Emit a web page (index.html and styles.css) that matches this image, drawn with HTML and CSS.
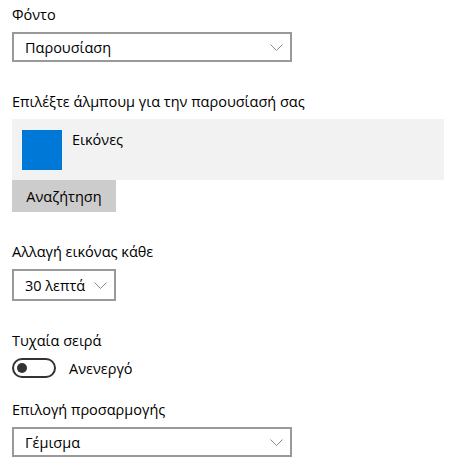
FILE: index.html
```html
<!DOCTYPE html>
<html lang="el">
<head>
    <meta charset="UTF-8">
    <title>Φόντο</title>
    <link rel="stylesheet" href="styles.css">
</head>
<body>
    <div class="settings">
        <div class="label first">Φόντο</div>
        <div class="select wide">
            <span>Παρουσίαση</span>
            <svg class="chev" width="13" height="7" viewBox="0 0 13 7"><path d="M0.5 0.5 L6.5 6.5 L12.5 0.5" fill="none" stroke="#8a8a8a" stroke-width="1"/></svg>
        </div>

        <div class="label">Επιλέξτε άλμπουμ για την παρουσίασή σας</div>
        <div class="album">
            <div class="thumb"></div>
            <div class="album-name">Εικόνες</div>
        </div>
        <button class="btn">Αναζήτηση</button>

        <div class="label">Αλλαγή εικόνας κάθε</div>
        <div class="select narrow">
            <span>30 λεπτά</span>
            <svg class="chev" width="13" height="7" viewBox="0 0 13 7"><path d="M0.5 0.5 L6.5 6.5 L12.5 0.5" fill="none" stroke="#8a8a8a" stroke-width="1"/></svg>
        </div>

        <div class="label">Τυχαία σειρά</div>
        <div class="toggle-row">
            <div class="toggle"><div class="knob"></div></div>
            <span>Ανενεργό</span>
        </div>

        <div class="label after-toggle">Επιλογή προσαρμογής</div>
        <div class="select wide">
            <span>Γέμισμα</span>
            <svg class="chev" width="13" height="7" viewBox="0 0 13 7"><path d="M0.5 0.5 L6.5 6.5 L12.5 0.5" fill="none" stroke="#8a8a8a" stroke-width="1"/></svg>
        </div>
    </div>
</body>
</html>
```
FILE: styles.css
```css
body {
    margin: 0;
    background: #fff;
    font-family: 'Open Sans', 'Noto Sans', sans-serif;
    font-size: 14.5px;
    color: #000;
}
.settings {
    padding: 0 12px;
}
.label {
    line-height: 20px;
    margin-top: 30px;
    margin-bottom: 7px;
}
.label.first {
    margin-top: 5px;
}
.label.after-toggle {
    margin-top: 22px;
}
.select {
    box-sizing: border-box;
    height: 30px;
    border: 2px solid #999;
    display: flex;
    align-items: center;
    justify-content: space-between;
    padding: 0 7px 0 11px;
}
.select.wide { width: 280px; }
.select.narrow { width: 104px; height: 32px; }
.chev { display: block; }
.album {
    background: #f2f2f2;
    width: 432px;
    height: 61px;
    box-sizing: border-box;
    padding: 11px 10px;
    display: flex;
    gap: 10px;
}
.thumb {
    width: 40px;
    height: 40px;
    background: #0078d7;
}
.album-name {
    line-height: 20px;
    margin-top: 0;
}
.btn {
    display: block;
    height: 32px;
    width: 104px;
    border: none;
    background: #ccc;
    font: inherit;
    color: #000;
    padding: 0;
}
.toggle-row {
    display: flex;
    align-items: center;
    gap: 13px;
}
.toggle {
    box-sizing: border-box;
    width: 44px;
    height: 20px;
    border: 2px solid #333;
    border-radius: 10px;
    display: flex;
    align-items: center;
    padding-left: 3px;
}
.knob {
    width: 10px;
    height: 10px;
    border-radius: 50%;
    background: #333;
}
```
